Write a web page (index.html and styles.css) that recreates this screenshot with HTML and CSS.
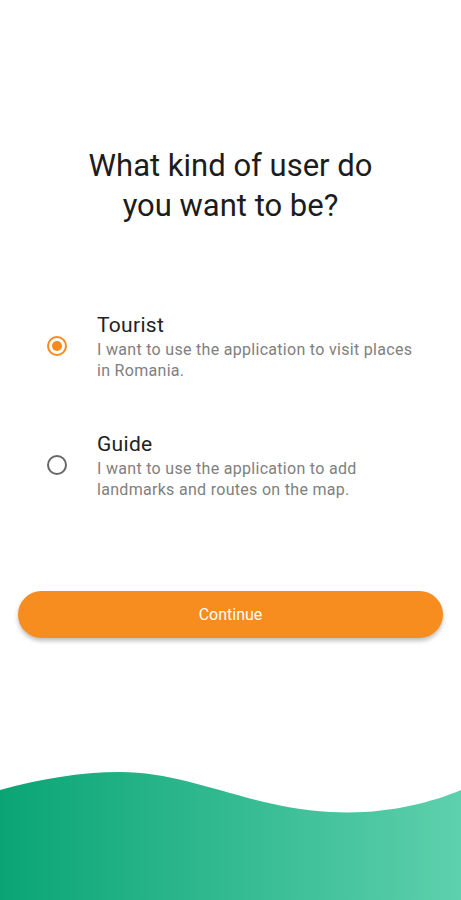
FILE: index.html
```html
<!DOCTYPE html>
<html lang="en">
<head>
  <meta charset="UTF-8">
  <title>Choose user type</title>
  <link rel="stylesheet" href="styles.css">
</head>
<body>
  <div class="screen">
    <h1>What kind of user do<br>you want to be?</h1>

    <div class="options">
      <label class="option">
        <span class="radio checked"></span>
        <span class="option-text">
          <span class="option-title">Tourist</span>
          <span class="option-desc">I want to use the application to visit places in Romania.</span>
        </span>
      </label>
      <label class="option">
        <span class="radio"></span>
        <span class="option-text">
          <span class="option-title">Guide</span>
          <span class="option-desc">I want to use the application to add landmarks and routes on the map.</span>
        </span>
      </label>
    </div>

    <button class="continue">Continue</button>

    <!-- onda verde no rodape -->
    <svg class="wave" viewBox="0 0 461 130" preserveAspectRatio="none">
      <defs>
        <linearGradient id="grad" x1="0" y1="0" x2="1" y2="0">
          <stop offset="0" stop-color="#0aa574"/>
          <stop offset="1" stop-color="#5dd0ac"/>
        </linearGradient>
      </defs>
      <path d="M0 20 C 40 9, 80 2, 120 2 C 190 2, 250 38, 330 42 C 385 45, 430 33, 461 20 L461 130 L0 130 Z" fill="url(#grad)"/>
    </svg>
  </div>
</body>
</html>
```

FILE: styles.css
```css
body {
  margin: 0;
  font-family: Roboto, "Noto Sans", sans-serif;
  background: #fff;
}
.screen {
  width: 461px;
  height: 900px;
  display: flex;
  flex-direction: column;
  overflow: hidden;
}
h1 {
  margin: 146px 0 0;
  text-align: center;
  font-size: 31px;
  font-weight: 400;
  line-height: 40px;
  color: #1c1c1c;
}
.options {
  margin-top: 85px;
  display: flex;
  flex-direction: column;
  gap: 49px;
}
.option {
  display: flex;
  align-items: center;
  padding-left: 47px;
}
.radio {
  width: 16px;
  height: 16px;
  border: 2px solid #666;
  border-radius: 50%;
  position: relative;
  flex: none;
}
.radio.checked {
  border-color: #f7891f;
}
.radio.checked::after {
  content: "";
  position: absolute;
  left: 3px;
  top: 3px;
  width: 10px;
  height: 10px;
  border-radius: 50%;
  background: #f7891f;
}
.option-text {
  display: flex;
  flex-direction: column;
  margin-left: 30px;
  width: 322px;
}
.option-title {
  font-size: 21px;
  line-height: 28px;
  letter-spacing: 0.3px;
  color: #222;
}
.option-desc {
  font-size: 16px;
  line-height: 21px;
  letter-spacing: 0.3px;
  color: #808080;
}
.continue {
  margin: 91px 18px 0;
  height: 47px;
  border: none;
  border-radius: 24px;
  background: #f78c1f;
  color: #fff;
  font-family: Roboto, "Noto Sans", sans-serif;
  font-size: 16px;
  box-shadow: 0 3px 4px rgba(0,0,0,0.25);
}
.wave {
  margin-top: auto;
  width: 461px;
  height: 130px;
  display: block;
}
```
